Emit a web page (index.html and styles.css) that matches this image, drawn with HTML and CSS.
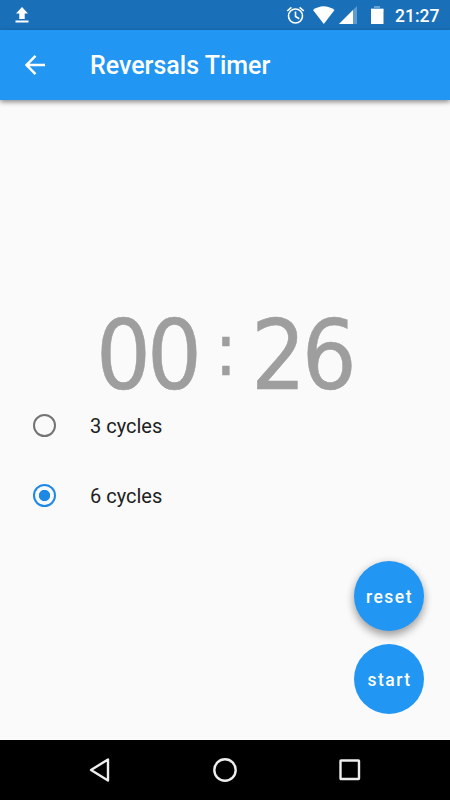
FILE: index.html
```html
<!DOCTYPE html>
<html lang="en">
<head>
<meta charset="utf-8">
<title>Reversals Timer</title>
<link rel="stylesheet" href="styles.css">
</head>
<body>
<div class="screen">
  <div class="status">
    <svg class="upload" width="14" height="16" viewBox="0 0 14 16" fill="#fff"><path d="M7 0 13 6.5H9.7V12H4.3V6.5H1zM.5 13.5h13v2H.5z"/></svg>
    <svg width="108" height="24" viewBox="0 0 108 24" fill="#fff">
      <g fill="none" stroke="#fff" stroke-width="1.6"><circle cx="15.500" cy="13" r="7"/><path d="M15.500 8.500v5l3.800 2.300M7.200 8l4.200-3.600M23.800 8l-4.200-3.600"/></g>
      <path d="M33 7q10.500-7.500 21.500 0L43.800 21z"/>
      <path opacity=".3" d="M77 3v18H59z"/><path d="M73 7v14H59z"/>
      <path opacity=".35" d="M94 3h6v2h3.500v4H91V5h3z"/><path d="M91 6h12.500v15H91z"/>
    </svg>
    <span class="clock">21:27</span>
  </div>
  <header class="bar">
    <svg width="20" height="20" viewBox="0 0 20 20" fill="none" stroke="#fff" stroke-width="2.500"><path d="M20 10H2M10.500 .900 1.600 10l8.900 9.100"/></svg>
    <h1>Reversals Timer</h1>
  </header>
  <main class="content">
    <div class="timer"><span>00</span><span class="colon">:</span><span>26</span></div>
    <label class="option"><span class="radio"></span><span>3 cycles</span></label>
    <label class="option"><span class="radio checked"></span><span>6 cycles</span></label>
    <div class="actions">
      <button class="fab raised">reset</button>
      <button class="fab">start</button>
    </div>
  </main>
  <nav class="nav">
    <svg width="22" height="26" viewBox="0 0 22 26"><path d="M19 2.500v21L2 13z"/></svg>
    <svg width="26" height="26" viewBox="0 0 26 26"><circle cx="13" cy="13" r="10.700"/></svg>
    <svg width="22" height="26" viewBox="0 0 22 26"><rect x="1.500" y="3.500" width="18.500" height="18.500" rx=".5"/></svg>
  </nav>
</div>
</body>
</html>
```
FILE: styles.css
```css
* { box-sizing: border-box; }
body { margin: 0; font-family: Roboto, sans-serif; }
svg { display: block; flex: none; }
.screen { width: 450px; height: 800px; display: flex; flex-direction: column; background: #fafafa; overflow: hidden; }
.status { height: 30px; background: #1a70b8; display: flex; align-items: flex-start; padding: 3px 0 0 15px; color: #fff; }
.upload { margin: 4px auto 0 0; }
.clock { width: 62px; padding-left: 7px; font-size: 17.500px; font-weight: 500; line-height: 26px; }
.bar { height: 70px; flex: none; display: flex; align-items: center; gap: 45px; padding-left: 25px; background: #2196f3; color: #fff; box-shadow: 0 2px 5px rgba(0,0,0,.45); }
.bar h1 { margin: 2px 0 0; font-size: 25px; font-weight: 500; line-height: 30px; }
.content { flex: 1; display: flex; flex-direction: column; padding-top: 213px; }
.timer { height: 78px; margin-bottom: -1px; display: flex; align-items: flex-start; padding-left: 96px; font-family: "DejaVu Sans Condensed", "DejaVu Sans", sans-serif; font-stretch: condensed; font-size: 96px; line-height: 87px; letter-spacing: -4px; color: #9e9e9e; -webkit-text-stroke: .5px #9e9e9e; }
.colon { width: 53px; padding-left: 3px; text-align: center; font-size: 73px; line-height: 73px; letter-spacing: 0; }
.option { height: 70px; display: flex; align-items: center; gap: 33px; padding: 1px 0 0 33px; font-size: 20px; color: #212121; }
.radio { width: 23px; height: 23px; border: 2.500px solid #737373; border-radius: 50%; }
.option span:last-child { margin-left: 1px; }
.checked { border-color: #1e88e5; background: radial-gradient(circle, #1e88e5 5.300px, transparent 6px); }
.actions { margin: 31px 26px 0 auto; display: flex; flex-direction: column; gap: 13px; }
.fab { width: 70px; height: 70px; padding: 2px 0 0 1px; border: 0; border-radius: 50%; background: #2196f3; color: #fff; font: 500 17.500px Roboto, sans-serif; letter-spacing: 1.500px; }
.raised { box-shadow: 0 5px 8px rgba(0,0,0,.3), 0 1px 10px rgba(0,0,0,.12); }
.nav { height: 60px; flex: none; background: #000; display: flex; align-items: center; justify-content: space-between; padding: 0 89px 0 89px; }
.nav svg { fill: none; stroke: #eee; stroke-width: 2.400; stroke-linejoin: round; }
```
